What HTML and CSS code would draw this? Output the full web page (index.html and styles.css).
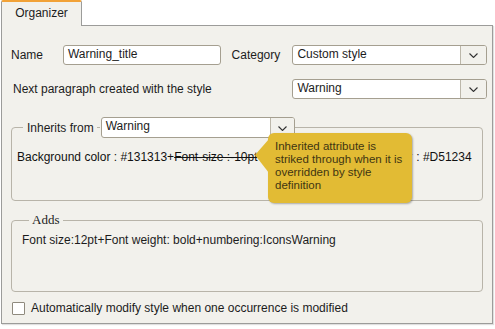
FILE: index.html
```html
<!DOCTYPE html>
<html>
<head>
<meta charset="utf-8">
<link rel="stylesheet" href="styles.css">
</head>
<body>
<div class="window">
  <div class="tabbar">
    <div class="tab">Organizer</div>
    <div class="tab-rest"></div>
  </div>
  <div class="panel">
    <div class="row row-name">
      <span class="lbl lbl-name">Name</span>
      <div class="input input-name">Warning_title</div>
      <span class="lbl lbl-cat">Category</span>
      <div class="select select-wide"><span class="val">Custom style</span><span class="btn"><svg width="9" height="5" viewBox="0 0 9 5"><path d="M0.5 0.5 L4.5 4.5 L8.5 0.5" fill="none" stroke="#333" stroke-width="1.1"/></svg></span></div>
    </div>
    <div class="row row-next">
      <span class="lbl lbl-next">Next paragraph created with the style</span>
      <div class="select select-wide"><span class="val">Warning</span><span class="btn"><svg width="9" height="5" viewBox="0 0 9 5"><path d="M0.5 0.5 L4.5 4.5 L8.5 0.5" fill="none" stroke="#333" stroke-width="1.1"/></svg></span></div>
    </div>
    <fieldset class="group group-inherits">
      <legend class="legend-inherits">
        <span class="legend-text">Inherits from</span>
        <span class="dash"></span>
        <div class="select select-legend"><span class="val">Warning</span><span class="btn btn-small"><svg width="9" height="5" viewBox="0 0 9 5"><path d="M0.5 0.5 L4.5 4.5 L8.5 0.5" fill="none" stroke="#333" stroke-width="1.1"/></svg></span></div>
      </legend>
      <p class="attrs">Background color : #131313+<span class="strike">Font-size :-10pt</span><span class="over">+Color : White + Border color</span> : #D51234<span class="tooltip"><svg class="tip-arrow" width="14" height="36" viewBox="0 0 14 36"><polygon points="0,17 14,1 14,35" fill="#e2bb34"/></svg>Inherited attribute is striked through when it is overridden by style definition</span></p>
    </fieldset>
    <fieldset class="group group-adds">
      <legend class="legend-adds">Adds</legend>
      <p class="adds-text">Font size:12pt+Font weight: bold+numbering:IconsWarning</p>
    </fieldset>
    <div class="check">
      <span class="box"></span>
      <span class="check-label">Automatically modify style when one occurrence is modified</span>
    </div>
  </div>
</div>
</body>
</html>
```

FILE: styles.css
```css
* { box-sizing: border-box; }
html, body { margin: 0; padding: 0; background: #ffffff; }
body {
  font-family: "Liberation Sans", Arial, sans-serif;
  font-size: 12px;
  color: #1c1c1c;
}
.window {
  width: 495px;
  height: 329px;
  padding: 0 2px 0 1px;
}
.tabbar {
  display: flex;
  height: 25px;
}
.tab {
  width: 81px;
  height: 26px;
  background: #f2f1ec;
  border-top: 2px solid #f2a237;
  border-left: 1px solid #9c9c9a;
  border-right: 1px solid #9c9c9a;
  border-radius: 2px 2px 0 0;
  text-align: center;
  line-height: 22px;
  position: relative;
  z-index: 2;
}
.panel {
  background: #f2f1ec;
  border: 1px solid #9c9c9a;
  height: 299px;
  padding: 19px 5px 0 9px;
  box-shadow: 1px 1px 1px rgba(0,0,0,0.12);
}
.row {
  display: flex;
  align-items: center;
  height: 20px;
}
.row-next { margin-top: 14px; }
.lbl-name { width: 52px; }
.lbl-cat { margin-left: 11px; width: 61px; }
.lbl-next { margin-left: 2px; width: 280px; }
.input {
  height: 20px;
  background: #fff;
  border: 1px solid #a59f90;
  border-radius: 3px;
  padding-left: 4px;
  line-height: 17px;
}
.input-name { width: 158px; }
.select {
  display: flex;
  height: 20px;
  background: #fff;
  border: 1px solid #a59f90;
  border-radius: 3px;
  overflow: hidden;
}
.select .val {
  flex: 1;
  padding-left: 4px;
  line-height: 17px;
}
.select .btn {
  width: 26px;
  border-left: 1px solid #bcb7aa;
  background: #f2f1ec;
  display: flex;
  align-items: center;
  justify-content: center;
}
.select .btn svg { margin-top: 1px; }
.select-wide { width: 195px; }
.group {
  margin: 0;
  border: 1px solid #b8b4a9;
  border-radius: 4px;
  width: 472px;
  position: relative;
}
.group-inherits {
  margin-top: 18px;
  height: 84px;
  padding: 0 0 0 5px;
}
.legend-inherits {
  display: flex;
  align-items: center;
  padding: 0;
  margin-left: 6px;
}
.legend-text { padding: 0 3px 0 4px; }
.dash {
  width: 3px;
  border-top: 1px solid #b8b4a9;
  margin-right: 1px;
}
.select-legend { width: 194px; height: 21px; }
.select-legend .btn { width: 24px; }
.attrs {
  margin: 12px 0 0 0;
  line-height: 14px;
  white-space: nowrap;
  position: relative;
  color: #111;
}
.strike { text-decoration: line-through; }
.over { color: #c9c7c0; }
.tooltip {
  position: absolute;
  left: 251px;
  top: -17px;
  width: 144px;
  height: 70px;
  background: #e2bb34;
  border-radius: 6px;
  box-shadow: 1px 1px 2px rgba(0,0,0,0.3);
  padding: 7px 4px 0 7px;
  white-space: normal;
  line-height: 13px;
  font-size: 11.5px;
  color: #3f3512;
}
.tip-arrow {
  position: absolute;
  left: -13px;
  top: 5px;
}
.group-adds {
  margin-top: 12px;
  height: 79px;
  padding: 0 0 0 10px;
}
.legend-adds {
  font-family: "Liberation Serif", "Times New Roman", serif;
  font-size: 13px;
  padding: 0 4px 0 3px;
  margin-left: 7px;
  line-height: 14px;
}
.adds-text {
  margin: 6px 0 0 0;
  line-height: 14px;
}
.check {
  display: flex;
  align-items: center;
  margin-top: 9px;
  margin-left: 1px;
}
.box {
  width: 13px;
  height: 13px;
  background: #fff;
  border: 1px solid #8f8a7e;
  border-radius: 1px;
  margin-right: 6px;
}
```
